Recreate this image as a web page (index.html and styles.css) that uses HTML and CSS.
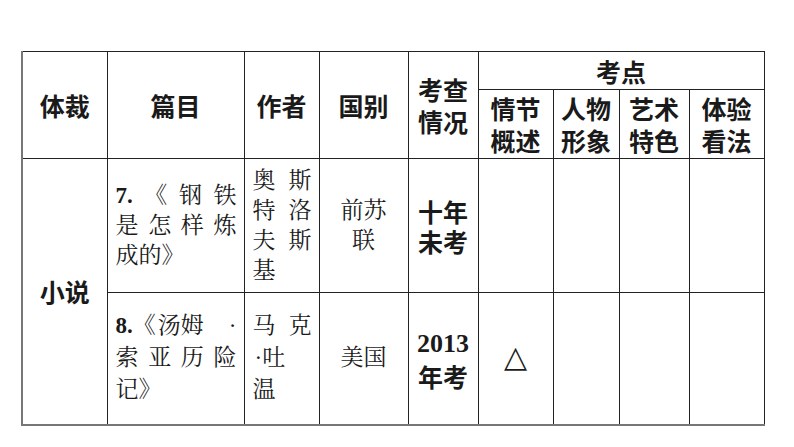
FILE: index.html
```html
<!DOCTYPE html>
<html lang="zh-CN">
<head>
<meta charset="utf-8">
<title>小说 考点</title>
<link rel="stylesheet" href="styles.css">
</head>
<body>
<table class="grid">
  <colgroup>
    <col class="c-genre"><col class="c-title"><col class="c-author"><col class="c-country"><col class="c-exam">
    <col class="c-k1"><col class="c-k2"><col class="c-k3"><col class="c-k4">
  </colgroup>
  <tr class="h-top">
    <th rowspan="2" class="first">体裁</th>
    <th rowspan="2">篇目</th>
    <th rowspan="2">作者</th>
    <th rowspan="2">国别</th>
    <th rowspan="2">考查<br>情况</th>
    <th colspan="4">考点</th>
  </tr>
  <tr class="h-sub">
    <th>情节<br>概述</th>
    <th>人物<br>形象</th>
    <th>艺术<br>特色</th>
    <th>体验<br>看法</th>
  </tr>
  <tr class="row-a">
    <td rowspan="2" class="first genre last">小说</td>
    <td class="title">
      <div class="jl"><span class="num">7.</span><span>《</span><span>钢</span><span>铁</span></div>
      <div class="jl"><span>是</span><span>怎</span><span>样</span><span>炼</span></div>
      <div class="ll">成的》</div>
    </td>
    <td class="author">
      <div class="jl"><span>奥</span><span>斯</span></div>
      <div class="jl"><span>特</span><span>洛</span></div>
      <div class="jl"><span>夫</span><span>斯</span></div>
      <div class="ll">基</div>
    </td>
    <td class="country">前苏<br>联</td>
    <td class="exam">十年<br>未考</td>
    <td></td><td></td><td></td><td></td>
  </tr>
  <tr class="row-b">
    <td class="title last">
      <div class="jl"><span><span class="num">8.</span><span class="brk">《</span>汤姆</span><span class="dot">·</span></div>
      <div class="jl"><span>索</span><span>亚</span><span>历</span><span>险</span></div>
      <div class="ll">记》</div>
    </td>
    <td class="author last">
      <div class="jl"><span>马</span><span>克</span></div>
      <div class="ll"><span class="dot ind">·</span>吐</div>
      <div class="ll">温</div>
    </td>
    <td class="country last">美国</td>
    <td class="exam last"><span class="num">2013</span><br>年考</td>
    <td class="mark last"><span class="tri">△</span></td>
    <td class="last"></td><td class="last"></td><td class="last"></td><td class="last"></td>
  </tr>
</table>
</body>
</html>
```

FILE: styles.css
```css
html, body {
  margin: 0;
  padding: 0;
  background: #ffffff;
}

body {
  padding: 51px 0 0 21px;
  color: #1a1a1a;
  font-family: "Noto Sans CJK SC", sans-serif;
}

.grid {
  border-collapse: collapse;
  table-layout: fixed;
  width: 743px;
}

.c-genre { width: 85px; }
.c-title { width: 137px; }
.c-author { width: 75px; }
.c-country { width: 89px; }
.c-exam { width: 70px; }
.c-k1 { width: 75px; }
.c-k2 { width: 66px; }
.c-k3 { width: 70px; }
.c-k4 { width: 75px; }

th, td {
  border: 1px solid #222;
  padding: 0;
  text-align: center;
  vertical-align: middle;
}

th {
  font-family: "Noto Sans CJK SC", sans-serif;
  font-weight: 700;
  font-size: 25px;
  line-height: 32px;
}

.h-top { height: 38px; }
.h-sub { height: 69px; }
.row-a { height: 134px; }
.row-b { height: 132px; }

.first { border-left: 2px solid #777; }
.last { border-bottom: 2px solid #777; }

td {
  font-family: "Liberation Serif", "Noto Serif CJK SC", "Noto Sans CJK SC", serif;
  font-size: 23px;
  font-weight: 400;
}

.row-a td { line-height: 30px; }
.row-b td { line-height: 32px; }

.genre, .exam {
  font-family: "Noto Sans CJK SC", sans-serif;
  font-weight: 700;
  font-size: 25px;
}

.exam .num {
  font-family: "Liberation Serif", serif;
  font-weight: 700;
  font-size: 26px;
}

.title {
  text-align: left;
  padding: 0 7px 0 8px;
}

.author {
  text-align: left;
  padding: 0 7px 0 8px;
}

.jl {
  display: flex;
  justify-content: space-between;
}

.ll {
  text-align: left;
}

.num {
  font-family: "Liberation Serif", serif;
  font-weight: 700;
}

.brk {
  margin-right: 2px;
}

.dot {
  font-family: "Liberation Serif", serif;
}

.ind {
  padding-left: 2px;
}

.mark {
  font-family: "DejaVu Sans", sans-serif;
}

.tri {
  font-size: 30px;
  line-height: 32px;
}
```
